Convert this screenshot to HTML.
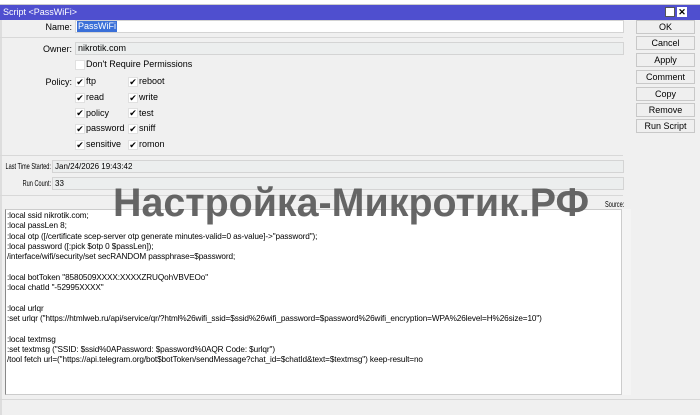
<!DOCTYPE html>
<html><head><meta charset="utf-8"><style>
*{margin:0;padding:0;box-sizing:border-box}
body{width:700px;height:415px;overflow:hidden;background:#f0f0f0;font-family:"Liberation Sans",Arial,sans-serif;font-size:9px;color:#000;position:relative}
.a{position:absolute}
.top{left:0;top:0;width:700px;height:5px;background:#fff;border-bottom:1px solid #ccc}
.title{left:0;top:5px;width:700px;height:15px;background:#4f4fcf;color:#fff;font-size:9px;line-height:15px;padding-left:3px}
.lbl{text-align:right;width:70px;line-height:12px}
.box{background:#eceeee;border:1px solid #d4d4d4;line-height:11px;padding-left:2px}
.cb{width:10px;height:10px;background:#fff;border:1px solid #e0e0e0;font-size:9px;line-height:9px;text-align:center}
.ct{line-height:11px}
.btn{left:636px;width:59px;height:14px;border:1px solid #c8c8c8;background:#efefef;text-align:center;line-height:12px;font-size:9px}
.sep{left:0;width:623px;height:1px;background:#d8d8d8}
.src{left:5px;top:209px;width:617px;height:186px;background:#fff;border:1px solid #ccc;border-left:1px solid #888;padding:1px 0 0 1px;font-size:8.2px;line-height:10.3px;white-space:pre;letter-spacing:-0.1px}
.wm{left:113px;top:178px;font-size:40px;font-weight:bold;color:rgba(85,85,85,.9);white-space:nowrap;line-height:50px;transform-origin:0 0;transform:scaleX(.985)}
.sm{font-size:8.5px;line-height:11px;white-space:nowrap;transform-origin:100% 0;transform:scaleX(.66)}
</style></head><body>
<div class="a top"></div>
<div class="a title">Script &lt;PassWiFi&gt;</div>
<div class="a" style="left:665px;top:7px;width:10px;height:10px;background:#fff;border:1px solid #555"></div>
<div class="a" style="left:677px;top:7px;width:10px;height:10px;background:#fff;font-size:9px;line-height:10px;text-align:center;font-weight:bold">✕</div>
<div class="a" style="left:0;top:20px;width:2px;height:395px;background:#ddd"></div>

<div class="a lbl" style="left:2px;top:21px">Name:</div>
<div class="a" style="left:75px;top:20px;width:549px;height:13px;background:#fff;border:1px solid #d4d4d4"><span style="background:#3a6fd8;color:#fff;padding:0 1px;line-height:11px;display:inline-block;margin-left:1px">PassWiFi</span></div>
<div class="a sep" style="top:37px"></div>
<div class="a lbl" style="left:2px;top:43px">Owner:</div>
<div class="a box" style="left:75px;top:42px;width:549px;height:13px">nikrotik.com</div>
<div class="a cb" style="left:75px;top:60px"></div>
<div class="a ct" style="left:86px;top:59px">Don't Require Permissions</div>
<div class="a lbl" style="left:2px;top:76px">Policy:</div>

<div class="a cb" style="left:75px;top:77px">✔</div><div class="a ct" style="left:86px;top:76px">ftp</div>
<div class="a cb" style="left:128px;top:77px">✔</div><div class="a ct" style="left:139px;top:76px">reboot</div>
<div class="a cb" style="left:75px;top:93px">✔</div><div class="a ct" style="left:86px;top:92px">read</div>
<div class="a cb" style="left:128px;top:93px">✔</div><div class="a ct" style="left:139px;top:92px">write</div>
<div class="a cb" style="left:75px;top:108px">✔</div><div class="a ct" style="left:86px;top:108px">policy</div>
<div class="a cb" style="left:128px;top:108px">✔</div><div class="a ct" style="left:139px;top:108px">test</div>
<div class="a cb" style="left:75px;top:124px">✔</div><div class="a ct" style="left:86px;top:123px">password</div>
<div class="a cb" style="left:128px;top:124px">✔</div><div class="a ct" style="left:139px;top:123px">sniff</div>
<div class="a cb" style="left:75px;top:140px">✔</div><div class="a ct" style="left:86px;top:139px">sensitive</div>
<div class="a cb" style="left:128px;top:140px">✔</div><div class="a ct" style="left:139px;top:139px">romon</div>
<div class="a sep" style="top:155px"></div>

<div class="a sm" style="right:649px;top:161px">Last Time Started:</div>
<div class="a box" style="left:52px;top:160px;width:572px;height:13px;font-size:8px">Jan/24/2026 19:43:42</div>
<div class="a sm" style="right:649px;top:178px">Run Count:</div>
<div class="a box" style="left:52px;top:177px;width:572px;height:13px;font-size:8px">33</div>
<div class="a sep" style="top:195px"></div>
<div class="a sm" style="right:76px;top:199px">Source:</div>

<div class="a src">:local ssid nikrotik.com;
:local passLen 8;
:local otp ([/certificate scep-server otp generate minutes-valid=0 as-value]-&gt;"password");
:local password ([:pick $otp 0 $passLen]);
/interface/wifi/security/set secRANDOM passphrase=$password;

:local botToken "8580509XXXX:XXXXZRUQohVBVEOo"
:local chatId "-52995XXXX"

:local urlqr
:set urlqr ("https://htmlweb.ru/api/service/qr/?html%26wifi_ssid=$ssid%26wifi_password=$password%26wifi_encryption=WPA%26level=H%26size=10")

:local textmsg
:set textmsg ("SSID: $ssid%0APassword: $password%0AQR Code: $urlqr")
/tool fetch url=("https://api.telegram.org/bot$botToken/sendMessage?chat_id=$chatId&amp;text=$textmsg") keep-result=no</div>
<div class="a" style="left:622px;top:209px;width:9px;height:186px;background:#f4f4f4"></div>
<div class="a" style="left:0;top:399px;width:700px;height:1px;background:#d8d8d8"></div>
<div class="a wm">Настройка-Микротик.РФ</div>

<div class="a btn" style="top:20px">OK</div>
<div class="a btn" style="top:36px">Cancel</div>
<div class="a btn" style="top:53px">Apply</div>
<div class="a btn" style="top:70px">Comment</div>
<div class="a btn" style="top:87px">Copy</div>
<div class="a btn" style="top:103px">Remove</div>
<div class="a btn" style="top:119px">Run Script</div>
</body></html>
